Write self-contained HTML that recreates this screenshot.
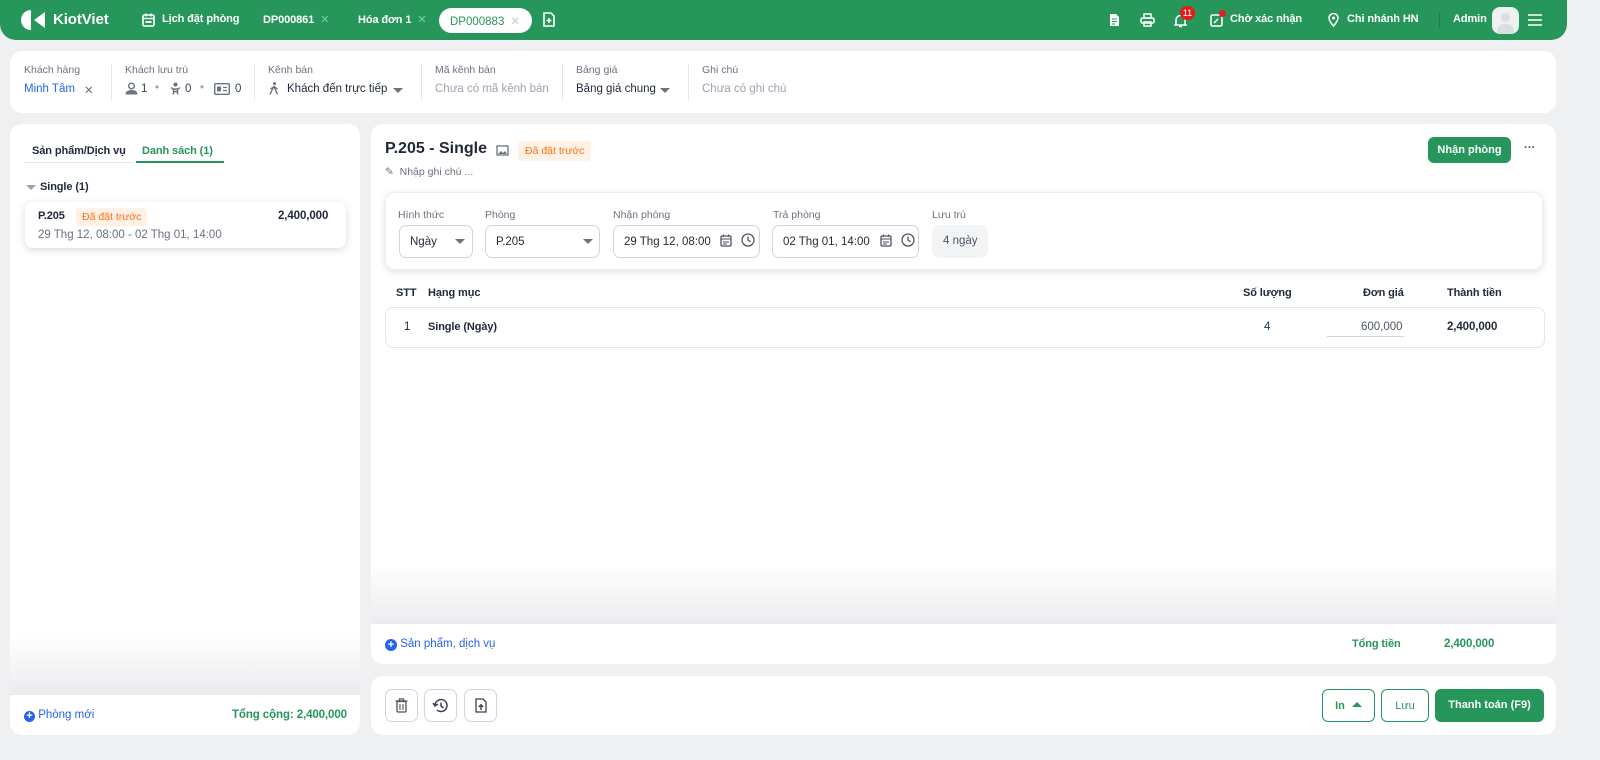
<!DOCTYPE html>
<html><head><meta charset="utf-8">
<style>
*{box-sizing:border-box;margin:0;padding:0}
body{width:1600px;height:760px;background:#eef0f2;font-family:"Liberation Sans",sans-serif;font-size:11.5px;color:#1f2937;position:relative;overflow:hidden}
.abs{position:absolute}
.hdr{left:0;top:0;width:1567px;height:40px;background:#26965a;border-radius:0 0 16px 16px;color:#fff;font-weight:bold}
.hdr .t{position:absolute;top:13px;font-size:11px;white-space:nowrap;letter-spacing:-0.1px}
.x{color:#7fcf9f;font-weight:normal;margin-left:6px}
.card{background:#fff;border-radius:12px;position:absolute}
.lbl{color:#6b7280;font-size:10.5px;position:absolute;white-space:nowrap}
.val{font-size:11.5px;position:absolute;white-space:nowrap}
.b{font-weight:bold;font-size:11px;letter-spacing:-0.1px}
.sep{position:absolute;width:1px;background:#e5e7eb;top:64px;height:36px}
.badge{background:#fff1e6;color:#f97316;border-radius:4px;padding:3px 6px;font-size:10.5px;position:absolute;white-space:nowrap}
.inp{position:absolute;top:225px;height:33px;border:1px solid #d1d5db;border-radius:7px;background:#fff;font-size:11.5px;padding:10px 0 0 10px;white-space:nowrap}
.tri{position:absolute;width:0;height:0;border-left:5px solid transparent;border-right:5px solid transparent;border-top:5px solid #6b7280}
.btn{position:absolute;border-radius:6px;font-weight:bold;font-size:11px;text-align:center}
.ib{position:absolute;top:689px;width:33px;height:33px;border:1px solid #d1d5db;border-radius:7px;background:#fff}
</style></head><body>

<div class="abs hdr">
  <svg class="abs" style="left:20px;top:9px" width="27" height="22" viewBox="0 0 27 22"><path d="M11 1 A10 10 0 0 0 11 21 Z" fill="#fff"/><path d="M25 3 L14 11 L25 19 Z" fill="#fff"/></svg>
  <div class="t" style="left:53px;top:11px;font-size:15px">KiotViet</div>
  <svg class="abs" style="left:142px;top:13px" width="13" height="14" viewBox="0 0 13 14"><rect x="1" y="2" width="11" height="11" rx="1.5" fill="none" stroke="#fff" stroke-width="1.6"/><path d="M1 5.5h11M4 0.5v3M9 0.5v3" stroke="#fff" stroke-width="1.5"/><rect x="3.5" y="8" width="6" height="2" fill="#fff"/></svg>
  <div class="t" style="left:162px">Lịch đặt phòng</div>
  <div class="t" style="left:263px">DP000861<span class="x">✕</span></div>
  <div class="t" style="left:358px">Hóa đơn 1<span class="x">✕</span></div>
  <div class="abs" style="left:439px;top:8px;width:93px;height:25px;background:#fff;border-radius:13px;color:#26965a;font-weight:normal;font-size:11.5px;padding:6px 0 0 11px;white-space:nowrap">DP000883<span style="color:#c7c7c7;margin-left:6px">✕</span></div>
  <svg class="abs" style="left:543px;top:12px" width="12" height="15" viewBox="0 0 12 15"><path d="M1 1h7l3 3v10H1z" fill="none" stroke="#fff" stroke-width="1.6"/><path d="M6 6v5M3.5 8.5h5" stroke="#fff" stroke-width="1.6"/></svg>

  <svg class="abs" style="left:1109px;top:13px" width="11" height="14" viewBox="0 0 11 14"><path d="M1 1h6l3 3v9H1z" fill="#fff"/><path d="M3 6h5M3 8.5h5M3 11h3" stroke="#26965a" stroke-width="1"/></svg>
  <svg class="abs" style="left:1140px;top:13px" width="15" height="14" viewBox="0 0 15 14"><rect x="4" y="1" width="7" height="4" fill="none" stroke="#fff" stroke-width="1.5"/><rect x="1" y="5" width="13" height="5" rx="1.5" fill="none" stroke="#fff" stroke-width="1.5"/><rect x="4" y="9" width="7" height="4" fill="none" stroke="#fff" stroke-width="1.5"/></svg>
  <svg class="abs" style="left:1174px;top:13px" width="13" height="15" viewBox="0 0 13 15"><path d="M2 11V7a4.5 4.5 0 0 1 9 0v4l1 1H1z" fill="none" stroke="#fff" stroke-width="1.5"/><path d="M5 13.5h3" stroke="#fff" stroke-width="1.5"/></svg>
  <div class="abs" style="left:1180px;top:6px;width:15px;height:14px;background:#e11d1d;border-radius:8px;font-size:9px;text-align:center;line-height:14px;font-weight:normal">11</div>
  <svg class="abs" style="left:1210px;top:12px" width="14" height="15" viewBox="0 0 14 15"><rect x="1" y="3" width="11" height="11" rx="1.5" fill="none" stroke="#fff" stroke-width="1.5"/><path d="M4 11l4-4" stroke="#fff" stroke-width="1.5"/></svg>
  <div class="abs" style="left:1219px;top:10px;width:7px;height:7px;background:#e11d1d;border-radius:4px"></div>
  <div class="t" style="left:1230px">Chờ xác nhận</div>
  <svg class="abs" style="left:1328px;top:13px" width="11" height="14" viewBox="0 0 11 14"><path d="M5.5 13C2 9 1 7 1 5a4.5 4.5 0 0 1 9 0c0 2-1 4-4.5 8z" fill="none" stroke="#fff" stroke-width="1.5"/><circle cx="5.5" cy="5" r="1.5" fill="#fff"/></svg>
  <div class="t" style="left:1347px">Chi nhánh HN</div>
  <div class="abs" style="left:1439px;top:13px;width:1px;height:15px;background:#1f7a48"></div>
  <div class="t" style="left:1453px">Admin</div>
  <div class="abs" style="left:1492px;top:7px;width:27px;height:27px;background:#eef0f2;border-radius:8px;overflow:hidden"><div class="abs" style="left:9px;top:6px;width:9px;height:9px;border-radius:5px;background:#dcdde0"></div><div class="abs" style="left:5px;top:17px;width:17px;height:14px;border-radius:8px;background:#dcdde0"></div></div>
  <svg class="abs" style="left:1528px;top:14px" width="14" height="12" viewBox="0 0 14 12"><path d="M0 1h14M0 6h14M0 11h14" stroke="#fff" stroke-width="1.6"/></svg>
</div>

<div class="card" style="left:10px;top:51px;width:1546px;height:62px"></div>
<div class="lbl" style="left:24px;top:64px">Khách hàng</div>
<div class="val" style="left:24px;top:83px;color:#2563eb">Minh Tâm</div>
<div class="val" style="left:84px;top:83px;color:#6b7280">✕</div>
<div class="sep" style="left:111px"></div>
<div class="lbl" style="left:125px;top:64px">Khách lưu trú</div>
<svg class="abs" style="left:125px;top:82px" width="13" height="13" viewBox="0 0 13 13"><circle cx="6.5" cy="4" r="2.8" fill="none" stroke="#6b7280" stroke-width="1.4"/><path d="M0.5 12.5c0-3 2.5-4.5 6-4.5s6 1.5 6 4.5z" fill="#6b7280"/></svg>
<div class="val" style="left:141px;top:83px;color:#374151">1</div>
<div class="val" style="left:155px;top:82px;color:#9ca3af">•</div>
<svg class="abs" style="left:170px;top:82px" width="11" height="13" viewBox="0 0 11 13"><circle cx="5.5" cy="2.5" r="2" fill="#6b7280"/><path d="M1 5.5l2 1.5h5l2-1.5M3.5 7v2.5h4V7M4 9.5l-1 3M7 9.5l1 3" fill="none" stroke="#6b7280" stroke-width="1.4"/></svg>
<div class="val" style="left:185px;top:83px;color:#374151">0</div>
<div class="val" style="left:200px;top:82px;color:#9ca3af">•</div>
<svg class="abs" style="left:214px;top:83px" width="16" height="12" viewBox="0 0 16 12"><rect x="0.7" y="0.7" width="14.6" height="10.6" rx="1" fill="none" stroke="#6b7280" stroke-width="1.4"/><rect x="3" y="3.5" width="4" height="5" fill="#6b7280"/><path d="M9 4.5h4M9 7.5h4" stroke="#6b7280" stroke-width="1.3"/></svg>
<div class="val" style="left:235px;top:83px;color:#374151">0</div>
<div class="sep" style="left:254px"></div>
<div class="lbl" style="left:268px;top:64px">Kênh bán</div>
<svg class="abs" style="left:269px;top:82px" width="10" height="13" viewBox="0 0 10 13"><circle cx="5.5" cy="1.6" r="1.5" fill="#6b7280"/><path d="M5 4L3 8l-2 4.5M5 4l1.5 4 2 4.5M4 5.5L1.5 7M5.5 5l3 2" fill="none" stroke="#6b7280" stroke-width="1.4"/></svg>
<div class="val" style="left:287px;top:83px">Khách đến trực tiếp</div>
<div class="tri" style="left:393px;top:88px"></div>
<div class="sep" style="left:421px"></div>
<div class="lbl" style="left:435px;top:64px">Mã kênh bán</div>
<div class="val" style="left:435px;top:83px;color:#9ca3af">Chưa có mã kênh bán</div>
<div class="sep" style="left:562px"></div>
<div class="lbl" style="left:576px;top:64px">Bảng giá</div>
<div class="val" style="left:576px;top:83px">Bảng giá chung</div>
<div class="tri" style="left:660px;top:88px"></div>
<div class="sep" style="left:688px"></div>
<div class="lbl" style="left:702px;top:64px">Ghi chú</div>
<div class="val" style="left:702px;top:83px;color:#9ca3af">Chưa có ghi chú</div>

<!-- left panel -->
<div class="card" style="left:10px;top:124px;width:350px;height:611px;overflow:hidden">
  <div class="abs" style="left:0;bottom:40px;width:350px;height:60px;background:linear-gradient(#fff,#ebecee)"></div>
</div>
<div class="abs" style="left:24px;top:162px;width:110px;height:1px;background:#e5e7eb"></div>
<div class="val b" style="left:32px;top:145px;color:#1f2937">Sản phẩm/Dịch vụ</div>
<div class="val b" style="left:142px;top:145px;color:#26965a">Danh sách (1)</div>
<div class="abs" style="left:136px;top:161px;width:88px;height:2px;background:#26965a"></div>
<div class="tri" style="left:26px;top:185px;border-top-color:#9ca3af"></div>
<div class="val b" style="left:40px;top:181px">Single (1)</div>
<div class="abs" style="left:25px;top:202px;width:321px;height:46px;background:#fff;border-radius:8px;box-shadow:0 2px 8px rgba(0,0,0,.15)"></div>
<div class="val b" style="left:38px;top:210px">P.205</div>
<div class="badge" style="left:76px;top:208px">Đã đặt trước</div>
<div class="val b" style="left:278px;top:210px;font-size:11.5px">2,400,000</div>
<div class="val" style="left:38px;top:229px;color:#6b7280">29 Thg 12, 08:00 - 02 Thg 01, 14:00</div>
<div class="val" style="left:24px;top:709px;color:#2563eb"><span style="display:inline-block;width:11px;height:11px;border-radius:6px;background:#2563eb;color:#fff;font-size:11px;line-height:11px;text-align:center;font-weight:bold;vertical-align:-1px">+</span> Phòng mới</div>
<div class="val b" style="left:232px;top:709px;color:#26965a;font-size:11.5px">Tổng cộng: 2,400,000</div>

<!-- main card -->
<div class="card" style="left:371px;top:124px;width:1185px;height:540px;overflow:hidden">
  <div class="abs" style="left:0;top:440px;width:1185px;height:60px;background:linear-gradient(#fff,#ebecee)"></div>
</div>
<div class="val" style="left:385px;top:140px;font-size:16px;font-weight:bold">P.205 - Single</div>
<svg class="abs" style="left:496px;top:145px" width="13" height="11" viewBox="0 0 13 11"><rect x="1" y="1" width="11" height="9" fill="none" stroke="#6b7280" stroke-width="1.3"/><path d="M2 9l3-3 2 2 2-2 2 3z" fill="#6b7280"/></svg>
<div class="badge" style="left:518px;top:141px;padding:4px 7px">Đã đặt trước</div>
<div class="val" style="left:385px;top:166px;color:#6b7280;font-size:10.5px">✎ &nbsp;Nhập ghi chú ...</div>
<div class="btn" style="left:1428px;top:137px;width:83px;height:26px;background:#26965a;color:#fff;padding-top:7px">Nhận phòng</div>
<div class="val" style="left:1524px;top:142px;color:#4b5563;font-weight:bold">···</div>

<div class="abs" style="left:385px;top:192px;width:1158px;height:78px;background:#fff;border-radius:10px;box-shadow:0 2px 8px rgba(0,0,0,.12);border:1px solid #eee"></div>
<div class="lbl" style="left:398px;top:209px">Hình thức</div>
<div class="lbl" style="left:485px;top:209px">Phòng</div>
<div class="lbl" style="left:613px;top:209px">Nhận phòng</div>
<div class="lbl" style="left:773px;top:209px">Trả phòng</div>
<div class="lbl" style="left:932px;top:209px">Lưu trú</div>
<div class="inp" style="left:399px;width:74px">Ngày</div><div class="tri" style="left:455px;top:239px"></div>
<div class="inp" style="left:485px;width:115px">P.205</div><div class="tri" style="left:583px;top:239px"></div>
<div class="inp" style="left:613px;width:147px">29 Thg 12, 08:00</div>
<div class="inp" style="left:772px;width:147px">02 Thg 01, 14:00</div>
<svg class="abs" style="left:720px;top:234px" width="12" height="13" viewBox="0 0 12 13"><rect x="1" y="2" width="10" height="10" rx="1" fill="none" stroke="#4b5563" stroke-width="1.3"/><path d="M1 5h10M3.5 0.5v2.5M8.5 0.5v2.5M3 8h6M3 10h4" stroke="#4b5563" stroke-width="1"/></svg>
<svg class="abs" style="left:741px;top:233px" width="14" height="14" viewBox="0 0 14 14"><circle cx="7" cy="7" r="6" fill="none" stroke="#4b5563" stroke-width="1.3"/><path d="M7 3.5V7l2.5 2" fill="none" stroke="#4b5563" stroke-width="1.3"/></svg>
<svg class="abs" style="left:880px;top:234px" width="12" height="13" viewBox="0 0 12 13"><rect x="1" y="2" width="10" height="10" rx="1" fill="none" stroke="#4b5563" stroke-width="1.3"/><path d="M1 5h10M3.5 0.5v2.5M8.5 0.5v2.5M3 8h6M3 10h4" stroke="#4b5563" stroke-width="1"/></svg>
<svg class="abs" style="left:901px;top:233px" width="14" height="14" viewBox="0 0 14 14"><circle cx="7" cy="7" r="6" fill="none" stroke="#4b5563" stroke-width="1.3"/><path d="M7 3.5V7l2.5 2" fill="none" stroke="#4b5563" stroke-width="1.3"/></svg>
<div class="abs" style="left:932px;top:225px;width:56px;height:33px;background:#f3f4f6;border-radius:8px;color:#4b5563;padding:10px 0 0 11px;white-space:nowrap">4 ngày</div>

<div class="val b" style="left:396px;top:287px">STT</div>
<div class="val b" style="left:428px;top:287px">Hạng mục</div>
<div class="val b" style="left:1243px;top:287px">Số lượng</div>
<div class="val b" style="left:1363px;top:287px">Đơn giá</div>
<div class="val b" style="left:1447px;top:287px">Thành tiền</div>
<div class="abs" style="left:385px;top:307px;width:1160px;height:41px;border:1px solid #e5e7eb;border-radius:8px;background:#fff"></div>
<div class="val" style="left:404px;top:321px">1</div>
<div class="val b" style="left:428px;top:321px">Single (Ngày)</div>
<div class="val" style="left:1264px;top:321px;color:#1e3a5f">4</div>
<div class="val" style="left:1361px;top:321px;color:#4b5563">600,000</div>
<div class="abs" style="left:1327px;top:336px;width:77px;height:1px;background:#d1d5db"></div>
<div class="val b" style="left:1447px;top:321px;font-size:11.5px">2,400,000</div>

<div class="val" style="left:385px;top:638px;color:#2563eb"><span style="display:inline-block;width:12px;height:12px;border-radius:6px;background:#2563eb;color:#fff;font-size:11px;line-height:12px;text-align:center;font-weight:bold;vertical-align:-1px">+</span> Sản phẩm, dịch vụ</div>
<div class="val b" style="left:1352px;top:638px;color:#26965a">Tổng tiền</div>
<div class="val b" style="left:1444px;top:638px;color:#26965a;font-size:11.5px">2,400,000</div>

<!-- bottom bar -->
<div class="card" style="left:371px;top:676px;width:1185px;height:59px"></div>
<div class="ib" style="left:385px"><svg class="abs" style="left:9px;top:8px" width="13" height="15" viewBox="0 0 13 15"><path d="M0.5 3h12M4.5 3V1h4v2" stroke="#4b5563" stroke-width="1.3" fill="none"/><rect x="2" y="3.5" width="9" height="10.5" rx="1" fill="none" stroke="#4b5563" stroke-width="1.3"/><path d="M5 6v6M8 6v6" stroke="#4b5563" stroke-width="1.1"/></svg></div>
<div class="ib" style="left:424px"><svg class="abs" style="left:7px;top:7px" width="17" height="17" viewBox="0 0 17 17"><path d="M3 8.5A6 6 0 1 1 5 13" fill="none" stroke="#374151" stroke-width="1.5"/><path d="M1 6l2 3 3-2" fill="none" stroke="#374151" stroke-width="1.5"/><path d="M9 5.5V9l2.5 2" fill="none" stroke="#374151" stroke-width="1.5"/></svg></div>
<div class="ib" style="left:464px"><svg class="abs" style="left:10px;top:8px" width="12" height="15" viewBox="0 0 12 15"><path d="M1 1h7l3 3v10H1z" fill="none" stroke="#374151" stroke-width="1.3"/><path d="M6 12V7M3.8 9L6 6.8 8.2 9" fill="none" stroke="#374151" stroke-width="1.4"/></svg></div>
<div class="btn" style="left:1322px;top:689px;width:53px;height:33px;border:1px solid #26965a;color:#26965a;padding-top:10px;background:#fff">In <span style="display:inline-block;width:0;height:0;border-left:5px solid transparent;border-right:5px solid transparent;border-bottom:5px solid #26965a;vertical-align:2px;margin-left:4px"></span></div>
<div class="btn" style="left:1381px;top:689px;width:48px;height:33px;border:1px solid #26965a;color:#26965a;padding-top:10px;background:#fff;font-weight:normal">Lưu</div>
<div class="btn" style="left:1435px;top:689px;width:109px;height:33px;background:#26965a;color:#fff;padding-top:10px">Thanh toán (F9)</div>
</body></html>
